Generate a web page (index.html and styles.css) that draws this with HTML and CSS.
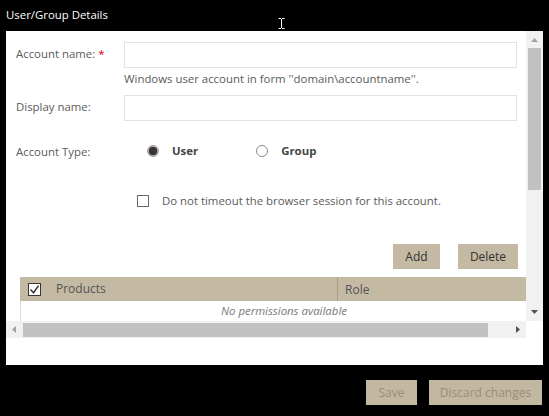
FILE: index.html
```html
<!DOCTYPE html>
<html>
<head>
<meta charset="utf-8">
<link rel="stylesheet" href="styles.css">
</head>
<body>
<div class="title">User/Group Details</div>
<div class="cursor"><svg width="7" height="11" viewBox="0 0 7 11"><path d="M0.5 0.5h2.5M4 0.5h2.5M3.5 1v9M0.5 10.5h2.5M4 10.5h2.5" stroke="#fff" stroke-width="1" fill="none"/></svg></div>
<div class="panel">
  <div class="scroller">
    <div class="content">
      <div class="row r1">
        <div class="label up">Account name: <span class="req">*</span></div>
        <div class="input"></div>
      </div>
      <div class="hint">Windows user account in form ''domain\accountname''.</div>
      <div class="row r2">
        <div class="label up">Display name:</div>
        <div class="input"></div>
      </div>
      <div class="row r3">
        <div class="label">Account Type:</div>
        <div class="radios">
          <span class="radio on"></span><span class="rlabel user">User</span>
          <span class="radio"></span><span class="rlabel">Group</span>
        </div>
      </div>
      <div class="row r4">
        <span class="cbox"></span><span class="cbtext">Do not timeout the browser session for this account.</span>
      </div>
      <div class="actions">
        <div class="btn add">Add</div>
        <div class="btn del">Delete</div>
      </div>
      <div class="table">
        <div class="thead">
          <div class="th chk"><svg width="13" height="13" viewBox="0 0 13 13"><rect x="0.5" y="0.5" width="12" height="12" fill="#fff" stroke="#3a3530"/><path d="M2.5 6.5l3 3.2 5-7" stroke="#3a3530" stroke-width="1.5" fill="none"/></svg></div>
          <div class="th prod">Products</div>
          <div class="th role">Role</div>
        </div>
        <div class="tbody">No permissions available</div>
      </div>
    </div>
    <div class="vbar">
      <svg class="arr" width="17" height="17" viewBox="0 0 17 17"><path d="M5 11h7l-3.5-4z" fill="#a3a3a3"/></svg>
      <div class="vthumb"></div>
      <div class="vspace"></div>
      <svg class="arr" width="17" height="17" viewBox="0 0 17 17"><path d="M5 6h7l-3.5 4z" fill="#505050"/></svg>
    </div>
    <div class="hbar">
      <svg class="arr" width="17" height="17" viewBox="0 0 17 17"><path d="M10 5v7l-4-3.5z" fill="#a3a3a3"/></svg>
      <div class="hthumb"></div>
      <div class="hspace"></div>
      <svg class="arr" width="17" height="17" viewBox="0 0 17 17"><path d="M7 5v7l4-3.5z" fill="#505050"/></svg>
    </div>
    <div class="corner"></div>
  </div>
</div>
<div class="footer">
  <div class="fbtn save">Save</div>
  <div class="fbtn discard">Discard changes</div>
</div>
</body>
</html>
```
FILE: styles.css
```css
html, body {
  margin: 0;
  padding: 0;
  background: #000;
  width: 549px;
  height: 416px;
  overflow: hidden;
  font-family: "Open Sans", "Noto Sans", sans-serif;
  font-size: 11.4px;
  position: relative;
}
.title {
  height: 31px;
  line-height: 30px;
  padding-left: 6px;
  color: #fff;
  font-size: 11.4px;
}
.cursor {
  position: absolute;
  left: 278px;
  top: 18px;
  width: 7px;
  height: 11px;
}
.cursor svg { display: block; }
.panel {
  margin-left: 6px;
  width: 537px;
  height: 334px;
  background: #fff;
}
.scroller {
  display: grid;
  grid-template-columns: 520px 17px;
  grid-template-rows: 290px 17px;
  height: 307px;
}
.content {
  overflow: hidden;
  padding: 11px 0 0 10px;
  box-sizing: border-box;
  color: #5a5a5a;
}
.row {
  display: flex;
  align-items: center;
}
.label {
  width: 108px;
  flex: none;
}
.label.up { margin-bottom: 3px; }
.req { color: #e00000; }
.input {
  width: 393px;
  height: 26px;
  border: 1px solid #e3e3e3;
  box-sizing: border-box;
  flex: none;
}
.hint {
  margin: 4px 0 0 108px;
  line-height: 14px;
  color: #5a5a5a;
}
.r2 { margin-top: 9px; }
.r3 { margin-top: 20px; height: 20px; }
.radios {
  display: flex;
  align-items: center;
  padding-left: 23px;
}
.radio {
  width: 12px;
  height: 12px;
  border-radius: 50%;
  border: 1px solid #8a8a8a;
  box-sizing: border-box;
  background: #fff;
  flex: none;
}
.radio.on {
  background: radial-gradient(circle, #3a3330 0 4px, #bdbdbd 4.6px);
  border-color: #9a9a9a;
}
.rlabel {
  font-weight: bold;
  color: #444;
  margin-left: 13px;
  margin-bottom: 2px;
}
.rlabel.user { margin-right: 58px; }
.r4 { margin-top: 30px; height: 20px; padding-left: 121px; }
.cbox {
  width: 12px;
  height: 12px;
  border: 1px solid #6a6a6a;
  box-sizing: border-box;
  flex: none;
}
.cbtext { margin-left: 13px; margin-bottom: 1px; }
.actions {
  display: flex;
  gap: 18px;
  margin-top: 33px;
  padding-left: 377px;
}
.btn {
  height: 25px;
  line-height: 25px;
  background: #c4b9a2;
  color: #333;
  text-align: center;
  font-size: 12px;
}
.add { width: 47px; }
.del { width: 60px; }
.table {
  margin-top: 8px;
  margin-left: 4px;
  width: 520px;
}
.thead {
  display: flex;
  height: 24px;
  background: #c4b9a3;
  align-items: center;
  color: #555;
  font-size: 12px;
}
.th.chk {
  width: 36px;
  padding-left: 8px;
  box-sizing: border-box;
  display: flex;
}
.th.prod {
  width: 281px;
  height: 24px;
  line-height: 24px;
  border-right: 1px solid #a89c86;
}
.th.role { padding-left: 7px; }
.tbody {
  height: 21px;
  line-height: 20px;
  border-left: 1px solid #ddd;
  font-style: italic;
  color: #777;
  padding-left: 200px;
}
.vbar {
  background: #f1f1f1;
  display: flex;
  flex-direction: column;
  align-items: center;
}
.arr { display: block; flex: none; }
.vthumb {
  width: 13px;
  height: 142px;
  background: #c1c1c1;
}
.vspace { flex: 1; }
.hbar {
  background: #f1f1f1;
  display: flex;
  align-items: center;
}
.hthumb {
  width: 465px;
  height: 14px;
  background: #c1c1c1;
}
.hspace { flex: 1; }
.corner { background: #fff; }
.footer {
  display: flex;
  justify-content: flex-end;
  gap: 12px;
  padding: 15px 7px 0 0;
}
.fbtn {
  height: 25px;
  line-height: 25px;
  background: #c2b8a0;
  color: #978d7c;
  text-align: center;
  font-size: 12px;
}
.save { width: 51px; }
.discard { width: 113px; }
```
